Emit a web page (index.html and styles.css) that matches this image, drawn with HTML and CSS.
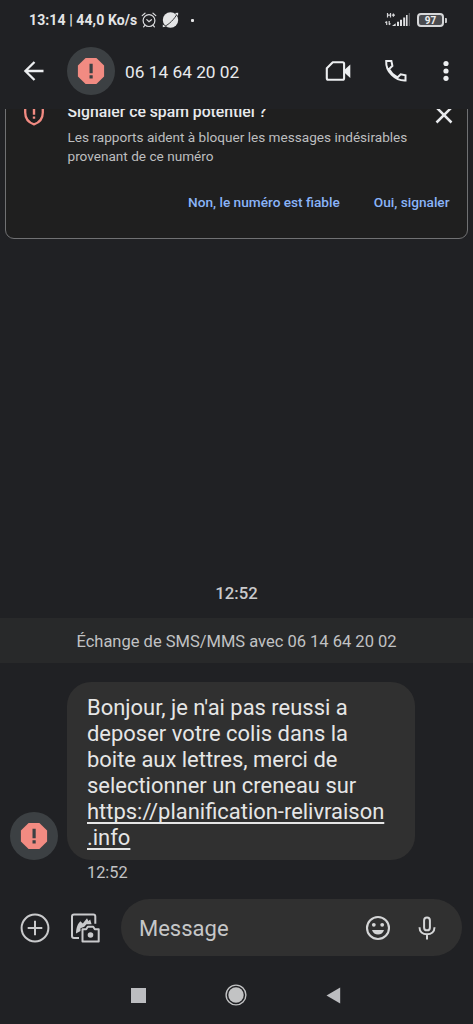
FILE: index.html
```html
<!DOCTYPE html>
<html lang="fr">
<head>
<meta charset="utf-8">
<title>Messages</title>
<link rel="stylesheet" href="styles.css">
</head>
<body>
<div class="phone">
  <header class="top">
    <div class="status">
      <span class="status-text">13:14 | 44,0 Ko/s</span>
      <svg class="alarm" width="16" height="16" viewBox="0 0 16 16" fill="none" stroke="#dcdddf" stroke-width="1.2" stroke-linecap="round"><circle cx="8" cy="8.6" r="5.9"/><path d="M1.2 3.6 4 1.2M14.8 3.6 12 1.2M5.8 7.6 8 9.7l2.4-2M3.6 13.6l-1 1.2M12.4 13.6l1 1.2"/></svg>
      <svg class="planet" width="17" height="16" viewBox="0 0 17 16"><circle cx="8.5" cy="8" r="7.7" fill="#e4e5e6"/><path d="M2.5 14.4C7 12.5 12.5 7 15.2 1.8" fill="none" stroke="#202124" stroke-width=".9"/><path d="M.8 12.5v2.7l3-.8M13 .9l3.2-.1-.2 3.2" fill="#e4e5e6"/></svg>
      <span class="dot"></span>
      <svg class="signal" width="25" height="16" viewBox="0 0 25 16"><g fill="none" stroke="#d5d6d8" stroke-width="1.2"><path d="M2.5 1v4.5M5.5 1v4.5M2.500 3.200h3M6.800 3.200H10M8.400 1.600v3.200M1.700 13V9.500M.4 10.800l1.300-1.400M4.200 9v3.700M5.400 11.400l-1.200 1.400"/></g><path fill="#dfe0e2" d="M7 14l3.700-2.700V14zM12 9.700h2V14h-2zM15 7.700h2V14h-2zM18.200 5.500h2V14h-2zM21 3h1.600v11H21z"/><path fill="#5b5c60" d="M23.700 1h1.300v13h-1.300z"/></svg>
      <span class="battery"><span class="battery-body">97</span><span class="battery-cap"></span></span>
    </div>
    <div class="appbar">
      <svg class="back" width="22" height="22" viewBox="0 0 22 22" fill="none" stroke="#eceef0" stroke-width="2.3"><path d="M20.500 11H2.500M11.500 2 2.400 11l9.100 9"/></svg>
      <span class="avatar"><svg width="28" height="28" viewBox="0 0 28 28"><path fill="#f28b82" d="M8.600.900h10.800l7.700 7.700v10.800l-7.700 7.700H8.600L.900 19.400V8.600z"/><path fill="#3c4043" d="M12.500 6.700h3.200v9.600h-3.200zM12.500 18.200h3.200v3.200h-3.200z"/></svg></span>
      <h1 class="number">06 14 64 20 02</h1>
      <svg class="video" width="27" height="22" viewBox="0 0 27 22"><path d="M7.800 2.300h9.800q1.500 0 1.500 1.500v14.400q0 1.500-1.500 1.500H3.300q-1.500 0-1.500-1.500V8.300z" fill="none" stroke="#eceef0" stroke-width="2.1" stroke-linejoin="round"/><path fill="#eceef0" d="M19 10.300 25.300 4.500v13.500L19 12.200z"/></svg>
      <svg class="call" width="24" height="24" viewBox="0 0 24 24"><path d="M2.200 2h5.200l1 4.800-3.300 3.300c1.900 3.700 4.700 6.500 8.300 8.400l3.300-3.200 4.800 1v5.200C11.200 22 1.600 12.600 2.200 2z" fill="none" stroke="#eceef0" stroke-width="2"/></svg>
      <svg class="more" width="6" height="22" viewBox="0 0 6 22" fill="#eceef0"><circle cx="3" cy="3.500" r="2.600"/><circle cx="3" cy="11" r="2.600"/><circle cx="3" cy="18.300" r="2.600"/></svg>
    </div>
  </header>

  <main class="thread">
    <section class="spam">
      <svg class="shield" width="22" height="26" viewBox="0 0 22 26"><path d="M11 2 2.200 5.500v7c0 6.500 3.800 10.200 8.800 11.800 5-1.600 8.800-5.300 8.800-11.800v-7z" fill="none" stroke="#f28b82" stroke-width="2.300"/><path fill="#f28b82" d="M9.800 6.500h2.400v8.200H9.800zM9.800 16.400h2.400v2.300H9.800z"/></svg>
      <div class="spam-body">
        <h2 class="spam-title">Signaler ce spam potentiel ?</h2>
        <p class="spam-text">Les rapports aident à bloquer les messages indésirables<br>provenant de ce numéro</p>
        <div class="actions"><span>Non, le numéro est fiable</span><span>Oui, signaler</span></div>
      </div>
      <svg class="close" width="18" height="18" viewBox="0 0 18 18"><path d="M1.500 1.500l15 15M16.500 1.500l-15 15" stroke="#e8eaed" stroke-width="2.500"/></svg>
    </section>
    <div class="day">12:52</div>
    <div class="notice">Échange de SMS/MMS avec 06 14 64 20 02</div>
    <div class="message">
      <span class="avatar"><svg width="28" height="28" viewBox="0 0 28 28"><path fill="#f28b82" d="M8.600.900h10.800l7.700 7.700v10.800l-7.700 7.700H8.600L.900 19.400V8.600z"/><path fill="#3c4043" d="M12.500 6.700h3.200v9.600h-3.200zM12.500 18.200h3.200v3.200h-3.200z"/></svg></span>
      <p class="bubble">Bonjour, je n'ai pas reussi a<br>deposer votre colis dans la<br>boite aux lettres, merci de<br>selectionner un creneau sur<br><span class="link">https://planification-relivraison<br>.info</span></p>
    </div>
    <div class="time">12:52</div>
  </main>

  <footer class="composer">
    <svg class="plus" width="30" height="30" viewBox="0 0 30 30" fill="none" stroke="#c9cacc" stroke-width="2"><circle cx="15" cy="15" r="13.400"/><path d="M15 7.700v14.600M7.700 15h14.600"/></svg>
    <svg class="gallery" width="30" height="30" viewBox="0 0 30 30"><path d="M9 25H4Q2 25 2 23V3.500Q2 1.500 4 1.500h19.300Q25.300 1.500 25.300 3.500v7.300" fill="none" stroke="#c9cacc" stroke-width="2"/><path fill="#c9cacc" d="M6 20.500c.2-6 1.600-9.200 4.300-12.200l2.500 2.100 4.200-5.200 1.400 2.800 1.800-1.400 1.400 4.600h-5.100l-2.200 2.500-3.800 1.500v2.700z"/><path d="M12.500 16.200h3.700l1.600-2.400h5.400l1.600 2.400h3.900v12.300H12.500z" fill="none" stroke="#c9cacc" stroke-width="2" stroke-linejoin="round"/><circle cx="20.500" cy="22" r="2.800" fill="#c9cacc"/></svg>
    <div class="field">
      <span class="placeholder">Message</span>
      <svg class="smile" width="26" height="26" viewBox="0 0 26 26"><circle cx="13" cy="13" r="11" fill="none" stroke="#d5d6d7" stroke-width="2.100"/><circle cx="8.800" cy="9.800" r="1.900" fill="#d5d6d7"/><circle cx="17.200" cy="9.800" r="1.900" fill="#d5d6d7"/><path fill="#d5d6d7" d="M7 15h12c-1 3-3.200 4.600-6 4.600S8 18 7 15z"/></svg>
      <svg class="mic" width="18" height="24" viewBox="0 0 18 24" fill="none" stroke="#d5d6d7" stroke-width="2"><rect x="6.100" y="1.500" width="5.800" height="12.800" rx="2.900"/><path d="M1.500 11.200c0 4.600 3.200 7 7.500 7s7.500-2.400 7.500-7M9 18v5.600"/></svg>
    </div>
  </footer>
  <nav class="nav">
    <span class="square"></span>
    <svg class="home" width="22" height="22" viewBox="0 0 22 22"><circle cx="11" cy="11" r="9.900" fill="none" stroke="#c2c3c4" stroke-width="1.400"/><circle cx="11" cy="11" r="7.700" fill="#c2c3c4"/></svg>
    <svg class="prev" width="15" height="17" viewBox="0 0 15 17"><path d="M.500 8.500 14.200.500v16z" fill="#bcbdc0"/></svg>
  </nav>
</div>
</body>
</html>
```
FILE: styles.css
```css
* { box-sizing: border-box; }
body { margin: 0; background: #202124; font-family: Roboto, sans-serif; color: #e8eaed; }
h1, h2, p { margin: 0; font-weight: 400; }
svg { display: block; flex: none; }
span, div { white-space: nowrap; }
.phone { width: 473px; height: 1024px; display: flex; flex-direction: column; overflow: hidden; background: #202124; }

.top { flex: none; height: 109px; }
.status { display: flex; align-items: center; height: 40px; padding-left: 29px; }
.status-text { width: 109px; font-size: 14px; font-weight: 700; letter-spacing: 0.1px; color: #e3e4e6; }
.alarm { margin-left: 3px; }
.planet { margin-left: 5px; }
.dot { width: 3px; height: 3px; margin-left: 12px; border-radius: 1px; background: #e4e5e6; }
.signal { margin-left: 191px; }
.battery { display: flex; align-items: center; margin-left: 7px; gap: 1px; }
.battery-body { width: 27px; height: 14px; border: 2px solid #d6d7d9; border-radius: 4px; background: #4a4b4f; font-size: 10px; font-weight: 700; line-height: 11px; text-align: center; color: #eee; }
.battery-cap { width: 2px; height: 5px; background: #c5c6c8; border-radius: 0 1px 1px 0; }

.appbar { display: flex; align-items: center; height: 62px; padding-left: 23px; }
.avatar { flex: none; display: flex; align-items: center; justify-content: center; width: 48px; height: 48px; border-radius: 50%; background: #3c4043; }
.appbar .avatar { margin-left: 22px; }
.number { width: 200px; margin-left: 10px; padding-top: 2px; font-size: 17.300px; line-height: 24px; white-space: nowrap; }
.call { margin-left: 32px; }
.more { margin-left: 35px; }

.thread { flex: none; height: 790px; overflow: hidden; }
.spam { display: flex; align-items: flex-start; width: 463px; height: 156px; margin: -26px 0 0 5px; border: 1px solid #707173; border-radius: 9px; background: #1f1f1f; }
.shield { margin: 16px 0 0 17px; }
.spam-body { width: 381px; margin: 18px 0 0 22.500px; }
.spam-title { font-size: 15.750px; font-weight: 500; line-height: 20px; white-space: nowrap; }
.spam-text { margin-top: 6px; font-size: 13.600px; line-height: 19px; color: #bdbebf; }
.actions { display: flex; justify-content: flex-end; gap: 34px; margin: 26px -1px 0 0; font-size: 13.650px; line-height: 20px; font-weight: 500; color: #8ab4f8; }
.close { margin: 22px 0 0 -13.500px; }
.day { height: 24px; margin-top: 343px; text-align: center; font-size: 16.700px; font-weight: 500; line-height: 24px; color: #c9cacc; }
.notice { height: 45px; margin-top: 12px; background: #28292a; text-align: center; font-size: 16.500px; line-height: 47px; color: #c1c2c4; }
.message { display: flex; align-items: flex-end; margin-top: 19px; padding-left: 10px; gap: 9px; }
.bubble { width: 348px; height: 178px; padding: 13px 19px 9px 20px; border-radius: 24px; background: #303030; font-size: 21.950px; line-height: 26px; color: #e6e6e6; }
.link { text-decoration: underline; text-decoration-thickness: 1.500px; text-underline-offset: 3px; text-decoration-skip-ink: none; }
.time { margin: 2px 0 0 87px; font-size: 16.300px; line-height: 22px; color: #c2c3c5; }

.composer { flex: none; display: flex; align-items: center; height: 57px; padding-left: 20px; }
.gallery { margin-left: 20px; }
.field { display: flex; align-items: center; width: 341px; height: 57px; margin-left: 21px; padding-left: 18px; border-radius: 29px; background: #303030; }
.placeholder { width: 226px; padding-top: 2px; font-size: 22px; line-height: 28px; color: #c6c7c8; }
.mic { margin-left: 27px; }
.nav { display: flex; align-items: center; height: 68px; padding: 10px 0 0 131px; }
.square { width: 15px; height: 15px; background: #bcbdc0; }
.home { margin-left: 79px; }
.prev { margin-left: 79px; }
```
